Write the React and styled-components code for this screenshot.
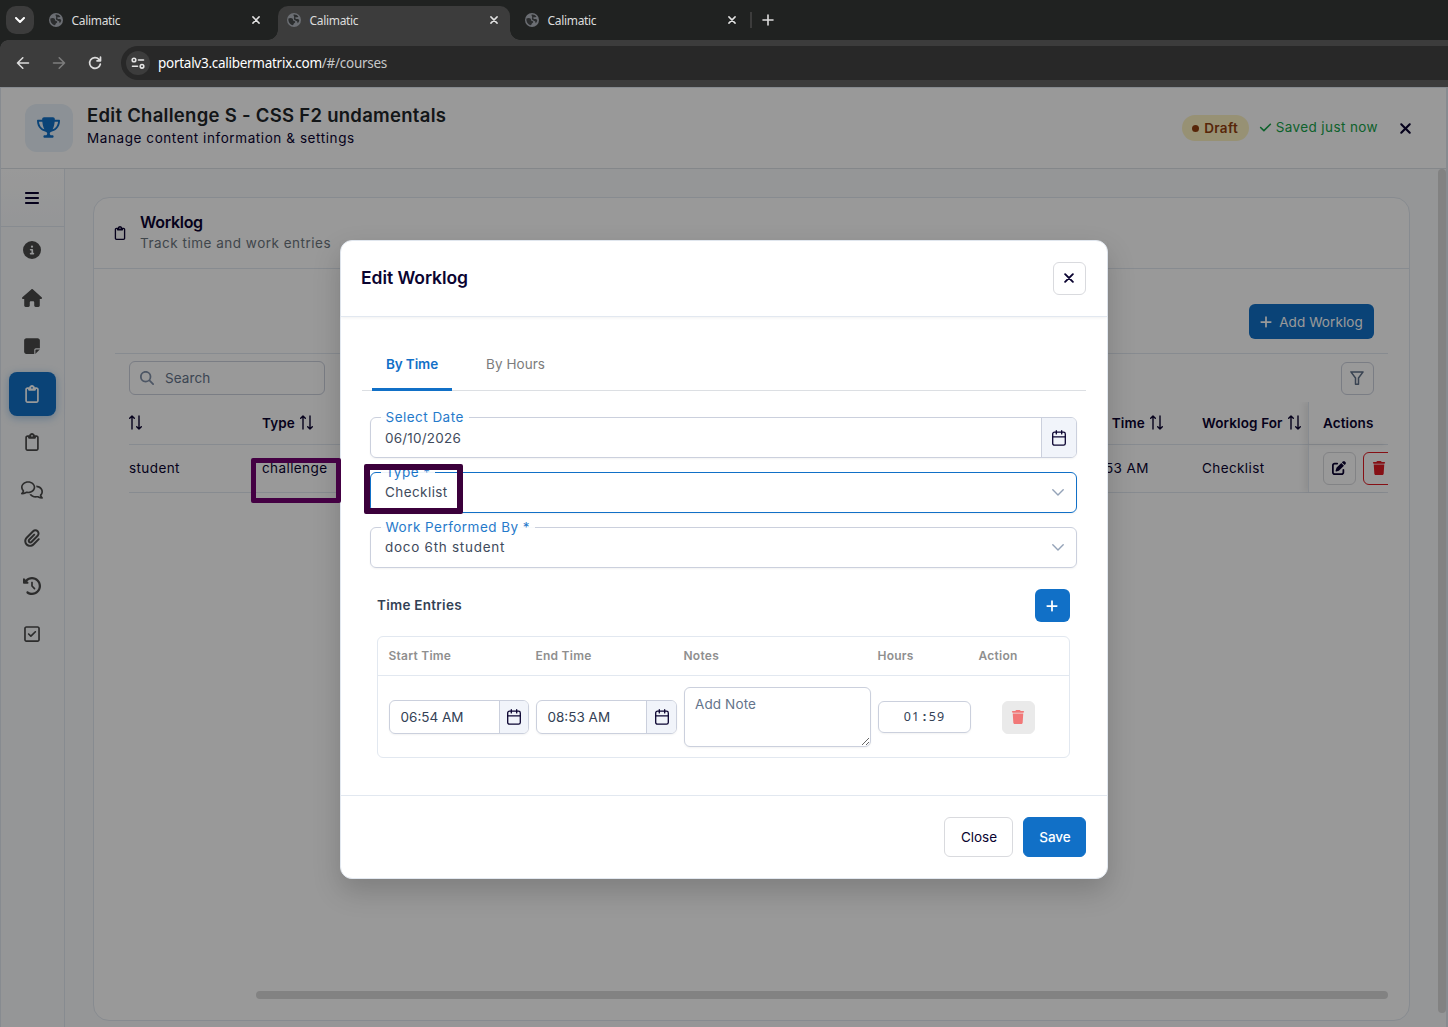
import React from "react";
import styled, { createGlobalStyle, css } from "styled-components";
import {
  FaTrophy, FaBars, FaCircleInfo, FaHouse, FaNoteSticky, FaRegClipboard, FaRegComments,
  FaPaperclip, FaClockRotateLeft, FaRegSquareCheck, FaXmark, FaCheck, FaPlus, FaTrash,
  FaMagnifyingGlass, FaPenToSquare,
} from "react-icons/fa6";

const primary = "#1170c7";
const ink = "#0a0330";
const line = "#e2e8f0";
const fieldLine = "#cbd0dd";

const GlobalStyle = createGlobalStyle`
  * { box-sizing: border-box; }
  body {
    margin: 0;
    overflow: hidden;
    font-family: Inter, "Open Sans", sans-serif;
    font-size: 13.5px;
    color: ${ink};
  }
  button { font: inherit; padding: 0; margin: 0; border: 0; background: none; color: inherit; }
  svg { display: block; flex: none; }
`;

const Window = styled.div`
  width: 1448px;
  height: 1027px;
  display: flex;
  flex-direction: column;
  overflow: hidden;
  background: #3c3c3c;
`;

/* Browser chrome */
const TabStrip = styled.div`
  height: 40px;
  flex: none;
  display: flex;
  align-items: flex-start;
  padding: 6px 0 0 6px;
  background: #202221;
  font-family: "Noto Sans", "Open Sans", sans-serif;
  font-size: 12px;
  color: #dcdcdc;
`;

const TabMenu = styled.button`
  width: 28px;
  height: 28px;
  border-radius: 10px;
  background: #3c3c3c;
  display: grid;
  place-items: center;
  margin-right: 6px;
`;

const foot = css`
  content: "";
  position: absolute;
  bottom: 0;
  width: 10px;
  height: 10px;
`;

const BrowserTab = styled.div`
  position: relative;
  width: 232px;
  height: 34px;
  margin-right: 6px;
  padding: 0 12px 6px 9px;
  display: flex;
  align-items: center;
  border-radius: 10px 10px 0 0;
  background: ${(p) => (p.$active ? "#3c3c3c" : "transparent")};
  ${(p) =>
    p.$active &&
    css`
      &::before { ${foot} left: -10px; background: radial-gradient(circle at 0 0, transparent 9.5px, #3c3c3c 10px); }
      &::after { ${foot} right: -10px; background: radial-gradient(circle at 100% 0, transparent 9.5px, #3c3c3c 10px); }
    `}
`;

const TabTitle = styled.span`
  flex: 1;
  margin-left: 8.5px;
  letter-spacing: -0.32px;
`;

const Separator = styled.i`
  width: 2px;
  height: 16px;
  margin: 6px 10px 0 -4px;
  background: #3c3c3c;
`;

const Toolbar = styled.div`
  height: 47px;
  flex: none;
  display: flex;
  align-items: center;
  padding-left: 14px;
  position: relative;
  background: #3c3c3c;
  &::before {
    content: "";
    position: absolute;
    left: 0;
    top: 0;
    width: 8px;
    height: 8px;
    background: radial-gradient(circle at 100% 100%, transparent 7.5px, #202221 8px);
  }
`;

const NavButton = styled.button`
  width: 18px;
  height: 18px;
  margin: 0 18px 1px 0;
  display: grid;
  place-items: center;
`;

const AddressBar = styled.div`
  flex: 1;
  height: 34px;
  margin: 0 0 1px -1px;
  display: flex;
  align-items: center;
  padding-left: 5px;
  border-radius: 17px 0 0 17px;
  background: #282828;
  font-family: "Noto Sans", "Open Sans", sans-serif;
  font-size: 13.5px;
  letter-spacing: -0.27px;
  color: #fff;
`;

const SiteInfo = styled.span`
  width: 24px;
  height: 24px;
  margin-right: 8px;
  border-radius: 50%;
  background: #3c3c3c;
  display: grid;
  place-items: center;
`;

const UrlPath = styled.span`
  color: #c7c7c7;
`;

/* Application page */
const Page = styled.div`
  position: relative;
  flex: 1;
  min-height: 0;
  display: flex;
  flex-direction: column;
  background: #f8fafc;
  border: solid ${line};
  border-width: 1px 2px 0 1px;
`;

const Header = styled.header`
  height: 81px;
  flex: none;
  display: flex;
  align-items: center;
  padding: 0 32px 0 24px;
  background: #fff;
  border-bottom: 1px solid #dde1e6;
`;

const TrophyTile = styled.div`
  width: 48px;
  height: 48px;
  margin-right: 14px;
  padding: 0 1px 1px 0;
  border-radius: 12px;
  background: #e9f2fa;
  color: ${primary};
  display: grid;
  place-items: center;
`;

const HeaderText = styled.div`
  flex: 1;
  margin-bottom: 4px;
`;

const Title = styled.h1`
  margin: 0;
  font-size: 18.5px;
  font-weight: 600;
  line-height: 25px;
  letter-spacing: 0.28px;
  color: #212529;
`;

const Subtitle = styled.p`
  margin: 0;
  line-height: 21px;
  letter-spacing: ${(p) => p.$spacing || 0.58}px;
  color: ${(p) => p.$color || ink};
`;

const DraftPill = styled.span`
  width: 67px;
  height: 26px;
  padding-bottom: 1px;
  border-radius: 13px;
  display: flex;
  align-items: center;
  justify-content: center;
  gap: 5px;
  background: #fcf2c2;
  color: #92400e;
  font-weight: 600;
  letter-spacing: 0.3px;
  &::before {
    content: "";
    width: 7px;
    height: 7px;
    margin-top: 1px;
    border-radius: 50%;
    background: currentColor;
  }
`;

const Saved = styled.span`
  display: flex;
  align-items: center;
  gap: 4px;
  margin: 0 19px 2px 10px;
  letter-spacing: 0.4px;
  color: #16a34a;
`;

const Main = styled.div`
  flex: 1;
  min-height: 0;
  display: flex;
`;

const Sidebar = styled.nav`
  width: 64px;
  flex: none;
  border-right: 1px solid ${line};
  display: flex;
  flex-direction: column;
  align-items: center;
  color: #4a4a4a;
`;

const MenuToggle = styled.button`
  width: 100%;
  height: 58px;
  flex: none;
  margin-bottom: -1px;
  padding-right: 1px;
  border-bottom: 1px solid ${line};
  background: linear-gradient(#fff, #f8fafc);
  display: grid;
  place-items: center;
  color: ${ink};
`;

const SideItem = styled.button`
  width: 47px;
  height: 44px;
  margin: 2px 0;
  padding-right: 1px;
  border-radius: 8px;
  display: grid;
  place-items: center;
  ${(p) =>
    p.$active &&
    css`
      background: ${primary};
      color: #fff;
      box-shadow: 0 2px 8px rgba(17, 112, 199, 0.35);
    `}
`;

const Content = styled.main`
  flex: 1;
  padding: 28px 28px 6px;
  min-width: 0;
`;

const Card = styled.section`
  height: 824px;
  display: flex;
  flex-direction: column;
  background: #fff;
  border: 1px solid ${line};
  border-radius: 16px;
`;

const CardHeader = styled.div`
  height: 71px;
  display: flex;
  align-items: center;
  padding-left: 19px;
  gap: 13px;
  border-bottom: 1px solid ${line};
`;

const CardTitle = styled.h2`
  margin: 0;
  font-size: 16px;
  line-height: 21px;
  font-weight: 600;
  letter-spacing: -0.3px;
`;

const CardBody = styled.div`
  flex: 1;
  display: flex;
  flex-direction: column;
  padding: 0 21px;
`;

const ActionBar = styled.div`
  height: 85px;
  display: flex;
  align-items: flex-end;
  justify-content: flex-end;
  padding: 0 14px 14px 0;
  border-bottom: 1px solid ${line};
`;

const AddButton = styled.button`
  width: 125px;
  height: 35px;
  padding-right: 1px;
  border-radius: 6px;
  background: ${primary};
  color: #fff;
  display: flex;
  align-items: center;
  justify-content: center;
  gap: 6px;
  letter-spacing: 0.08px;
`;

const FilterBar = styled.div`
  height: 48px;
  display: flex;
  align-items: center;
  justify-content: space-between;
  padding: 0 14px;
`;

const SearchBox = styled.div`
  width: 196px;
  height: 34px;
  padding-left: 10px;
  display: flex;
  align-items: center;
  gap: 11px;
  border: 1px solid ${fieldLine};
  border-radius: 6px;
  color: #64748b;
  letter-spacing: 0.1px;
`;

const IconButton = styled.button`
  width: 33px;
  height: 33px;
  flex: none;
  display: grid;
  place-items: center;
  padding: 0 1px 1px 0;
  border: 1px solid ${(p) => p.$border || "#d9dade"};
  border-radius: 6px;
  color: ${(p) => p.$color || ink};
  background: ${(p) => p.$bg || "transparent"};
`;

const LogTable = styled.div`
  margin-left: 14px;
  overflow: hidden;
`;

const LogRow = styled.div`
  display: grid;
  grid-template-columns: 133px 821px 119px 106px 80px;
  height: ${(p) => (p.$head ? 43 : 48)}px;
  border-bottom: 1px solid ${line};
  font-weight: ${(p) => (p.$head ? 600 : 400)};
  letter-spacing: ${(p) => (p.$head ? "0.12px" : "0.4px")};
`;

const LogCell = styled.div`
  display: flex;
  align-items: center;
  gap: 5px;
  padding-bottom: 1px;
  white-space: nowrap;
  svg { margin-bottom: 1px; }
`;

const ActionCell = styled(LogCell)`
  padding: 0 0 ${(p) => (p.$head ? 1 : 0)}px 14px;
  gap: 7px;
  overflow: visible;
  border-left: 1px solid ${line};
  box-shadow: -4px 0 6px rgba(0, 0, 0, 0.07);
  svg { margin: 0; }
`;

const HScroll = styled.div`
  height: 8px;
  margin: auto 0 21px 141px;
  border-radius: 4px;
  background: #d9d9d9;
`;

const VScroll = styled.div`
  width: 8px;
  height: 844px;
  flex: none;
  border-radius: 4px;
  background: #d9d9d9;
`;

/* Modal */
const Backdrop = styled.div`
  position: absolute;
  inset: -1px -2px 0 -1px;
  display: flex;
  justify-content: center;
  align-items: flex-start;
  padding-top: 153px;
  background: rgba(0, 0, 0, 0.4);
`;

const Dialog = styled.div`
  width: 768px;
  height: 639px;
  display: flex;
  flex-direction: column;
  background: #fff;
  border: 1px solid ${line};
  border-radius: 12px;
  box-shadow: 0 12px 28px rgba(0, 0, 0, 0.18);
`;

const DialogHeader = styled.div`
  height: 76px;
  flex: none;
  display: flex;
  align-items: center;
  justify-content: space-between;
  padding: 0 21px 0 20px;
  border-bottom: 1px solid ${line};
  box-shadow: 0 1px 3px rgba(0, 0, 0, 0.06);
`;

const DialogTitle = styled.h2`
  margin: 0 0 2px;
  font-size: 17.5px;
  font-weight: 600;
  letter-spacing: -0.06px;
`;

const DialogBody = styled.div`
  flex: 1;
  padding: 20px 21px 0;
`;

const Tabs = styled.div`
  height: 54px;
  display: flex;
  gap: 20px;
  padding-left: 10px;
  border-bottom: 1px solid #dcdfe3;
`;

const Tab = styled.button`
  height: 54px;
  width: ${(p) => p.$width}px;
  padding-top: 2px;
  border-bottom: 3px solid ${(p) => (p.$active ? primary : "transparent")};
  border-radius: 2px 2px 0 0;
  color: ${(p) => (p.$active ? primary : "#7c7c7c")};
  font-weight: ${(p) => (p.$active ? 600 : 400)};
  letter-spacing: ${(p) => (p.$active ? "-0.1px" : "0.05px")};
`;

const Fields = styled.div`
  display: flex;
  flex-direction: column;
  gap: 14px;
  padding: 26px 9px 0 8px;
`;

const Field = styled.div`
  position: relative;
  height: 41px;
  padding-left: 14px;
  display: flex;
  align-items: center;
  justify-content: space-between;
  border: 1px solid ${(p) => (p.$focused ? primary : fieldLine)};
  border-radius: 6px;
  box-shadow: 0 1px 2px rgba(18, 18, 23, 0.05);
  color: #3f4b5c;
`;

const FieldValue = styled.span`
  padding-bottom: ${(p) => p.$lift || 0}px;
  letter-spacing: ${(p) => p.$spacing}px;
`;

const FieldLabel = styled.label`
  position: absolute;
  left: 10px;
  top: -10px;
  padding: 0 5px 0 4.5px;
  line-height: 18px;
  background: #fff;
  color: ${primary};
  opacity: 0.92;
  letter-spacing: 0.47px;
`;

const FieldButton = styled.span`
  width: ${(p) => p.$width}px;
  align-self: stretch;
  display: grid;
  place-items: center;
  border-left: 1px solid ${fieldLine};
  border-radius: 0 5px 5px 0;
  background: #f1f4fa;
  color: ${ink};
`;

const ChevronSlot = styled.span`
  margin-right: 12px;
`;

const EntriesHeader = styled.div`
  display: flex;
  align-items: center;
  justify-content: space-between;
  margin: 21px 16px 14px 15px;
  height: 33px;
  font-weight: 600;
  color: #334155;
  letter-spacing: 0.27px;
`;

const EntriesTitle = styled.span`
  padding-bottom: 2px;
`;

const PlusButton = styled.button`
  width: 35px;
  height: 33px;
  padding-right: 1px;
  border-radius: 6px;
  background: ${primary};
  color: #fff;
  display: grid;
  place-items: center;
`;

const Entries = styled.div`
  height: 122px;
  margin: 0 16px 0 15px;
  border: 1px solid ${line};
  border-radius: 6px;
`;

const EntryRow = styled.div`
  display: grid;
  grid-template-columns: 147px 148px 194px 101px 1fr;
  align-items: center;
  padding-left: 11px;
  height: ${(p) => (p.$head ? 39 : 82)}px;
  border-bottom: ${(p) => (p.$head ? `1px solid ${line}` : "0")};
`;

const EntryHead = styled.span`
  margin: 0 0 2px -0.5px;
  font-size: 12px;
  font-weight: 600;
  letter-spacing: 0.25px;
  color: #8f8f8f;
`;

const TimeInput = styled.div`
  width: ${(p) => p.$width}px;
  height: 34px;
  display: flex;
  align-items: center;
  justify-content: space-between;
  padding-left: 10.5px;
  border: 1px solid ${fieldLine};
  border-radius: 6px;
  box-shadow: 0 1px 2px rgba(18, 18, 23, 0.05);
  color: #334155;
`;

const NoteArea = styled.textarea`
  width: 187px;
  height: 60px;
  margin: 0;
  padding: 8px 10px;
  border: 1px solid ${fieldLine};
  border-radius: 6px;
  box-shadow: 0 1px 2px rgba(18, 18, 23, 0.05);
  font: inherit;
  line-height: 17px;
  letter-spacing: 0.12px;
  outline: 0;
  &::placeholder { color: #64748b; opacity: 1; }
`;

const HoursBox = styled.div`
  width: 93px;
  height: 32px;
  padding-bottom: 1px;
  display: flex;
  align-items: center;
  justify-content: center;
  border: 1px solid ${fieldLine};
  border-radius: 6px;
  box-shadow: 0 1px 2px rgba(18, 18, 23, 0.05);
  font-family: "Noto Sans", "Open Sans", sans-serif;
  font-size: 12.5px;
  letter-spacing: 1.2px;
  color: #334155;
`;

const Colon = styled.b`
  margin: 0 1.2px 0 2.4px;
`;

const DeleteEntry = styled(IconButton)`
  margin-left: 23px;
`;

const DialogFooter = styled.div`
  height: 83px;
  flex: none;
  display: flex;
  align-items: center;
  justify-content: flex-end;
  gap: 10px;
  padding-right: 21px;
  border-top: 1px solid ${line};
`;

const FooterButton = styled.button`
  width: ${(p) => (p.$primary ? 63 : 69)}px;
  height: 40px;
  padding-left: 1px;
  border-radius: 6px;
  border: 1px solid ${(p) => (p.$primary ? primary : "#d9dade")};
  background: ${(p) => (p.$primary ? primary : "#fff")};
  color: ${(p) => (p.$primary ? "#fff" : ink)};
  font-weight: ${(p) => (p.$primary ? 500 : 400)};
`;

/* Highlight frames drawn over the page */
const Marker = styled.div`
  position: absolute;
  left: ${(p) => p.$x}px;
  top: ${(p) => p.$y}px;
  width: ${(p) => p.$w}px;
  height: ${(p) => p.$h}px;
  border: ${(p) => p.$t}px solid ${(p) => p.$color};
  border-radius: 2px;
`;

const stroke = { fill: "none", stroke: "currentColor", strokeLinecap: "round", strokeLinejoin: "round" };

const Globe = () => (
  <svg width="14" height="14" viewBox="0 0 14 14">
    <circle cx="7" cy="7" r="7" fill="#6b6e73" />
    <path d="M1.4 5.600c1.600-.9 3.400-.9 4.300.2.700.9 0 1.600.9 2 .9.300 1.800.300 1.600 1.400-.2.900-1.300.8-1.500 1.600-.1.700-.5 1.400-1.300 1.400C2.900 11.600 1 8.800 1.400 5.600zM6.600 1.600c1.900-.3 3.700.5 4.700 1.900-.3.900-1.200.8-2 .7-.9 0-1.300.6-.8 1.200.5.700 1.500.5 2.200.7.9.3 1.600.8 1.500 1.600-.2 1-.7 1.800-1.400 2.500-.5-.6-.2-1.400-.8-2C9.300 7.600 7.900 7.500 7.100 6.400c-.6-.9.200-1.600.1-2.400-.1-.8-1-1.300-.6-2.400z" fill="#2b2d2e" />
  </svg>
);

const Cross = ({ size = 8, width = 1.5, color = "#e2e2e2" }) => (
  <svg width={size} height={size} viewBox="0 0 8 8" {...stroke} stroke={color} strokeWidth={width}>
    <path d="M.9.9l6.200 6.200M7.100.9L.9 7.100" />
  </svg>
);

const SortArrows = () => (
  <svg width="14" height="15" viewBox="0 0 14 15" {...stroke} strokeWidth="1.400">
    <path d="M3 14V1M.7 3.300L3 1l2.300 2.300M10 1v13M7.700 11.700L10 14l2.300-2.300" />
  </svg>
);

const Calendar = () => (
  <svg width="14" height="16" viewBox="0 0 14 16" {...stroke} strokeWidth="1.300">
    <rect x=".7" y="2.200" width="12.600" height="13" rx="1.800" />
    <path d="M.7 6.800h12.600M4.300.7v3.200M9.700.7v3.200" />
  </svg>
);

const Chevron = () => (
  <svg width="12" height="7" viewBox="0 0 12 7" {...stroke} stroke="#94a3b8" strokeWidth="1.400">
    <path d="M.8.8L6 6 11.200.8" />
  </svg>
);

const Funnel = () => (
  <svg width="14" height="14" viewBox="0 0 14 14" {...stroke} stroke="#5f7088" strokeWidth="1.500">
    <path d="M.9.9h12.200L8.500 7v6.200h-3V7z" />
  </svg>
);

const sideIcons = [
  [FaCircleInfo, 18], [FaHouse, 20], [FaNoteSticky, 18], [FaRegClipboard, 18], [FaRegClipboard, 18],
  [FaRegComments, 22], [FaPaperclip, 18], [FaClockRotateLeft, 18], [FaRegSquareCheck, 18],
];

export default function App() {
  return (
    <Window>
      <GlobalStyle />
      <TabStrip>
        <TabMenu>
          <svg width="10" height="6" viewBox="0 0 10 6" {...stroke} stroke="#fff" strokeWidth="2">
            <path d="M1 1l4 4 4-4" />
          </svg>
        </TabMenu>
        {[0, 1, 2].map((i) => (
          <BrowserTab key={i} $active={i === 1}>
            <Globe />
            <TabTitle>Calimatic</TabTitle>
            <Cross />
          </BrowserTab>
        ))}
        <Separator />
        <svg width="12" height="28" viewBox="0 0 12 28" {...stroke} stroke="#dcdcdc" strokeWidth="1.600">
          <path d="M6 9v10M1 14h10" />
        </svg>
      </TabStrip>
      <Toolbar>
        <NavButton>
          <svg width="14" height="14" viewBox="0 0 14 14" {...stroke} stroke="#dcdcdc" strokeWidth="1.600">
            <path d="M12.500 7H1.500M6.800 1.800L1.500 7l5.300 5.200" />
          </svg>
        </NavButton>
        <NavButton>
          <svg width="14" height="14" viewBox="0 0 14 14" {...stroke} stroke="#7d7d7d" strokeWidth="1.600">
            <path d="M1.500 7h11M7.200 1.800L12.500 7l-5.300 5.200" />
          </svg>
        </NavButton>
        <NavButton>
          <svg width="14" height="14" viewBox="0 0 14 14" {...stroke} stroke="#dcdcdc" strokeWidth="1.700">
            <path d="M12.300 8.200A5.400 5.400 0 1 1 11 3.300l1.500 1.400M12.500 1.200v3.600H9" />
          </svg>
        </NavButton>
        <AddressBar>
          <SiteInfo>
            <svg width="14" height="12" viewBox="0 0 14 12" {...stroke} stroke="#e6e6e6" strokeWidth="1.600">
              <circle cx="3" cy="3" r="1.800" />
              <path d="M7.500 3h5M1.500 9.300h5" />
              <circle cx="11" cy="9.300" r="1.800" />
            </svg>
          </SiteInfo>
          <span>portalv3.calibermatrix.com<UrlPath>/#/courses</UrlPath></span>
        </AddressBar>
      </Toolbar>

      <Page>
        <Header>
          <TrophyTile><FaTrophy size={23} /></TrophyTile>
          <HeaderText>
            <Title>Edit Challenge S - CSS F2 undamentals</Title>
            <Subtitle>Manage content information &amp; settings</Subtitle>
          </HeaderText>
          <DraftPill>Draft</DraftPill>
          <Saved><FaCheck size={13} />Saved just now</Saved>
          <FaXmark size={17} />
        </Header>
        <Main>
          <Sidebar>
            <MenuToggle><FaBars size={16} /></MenuToggle>
            {sideIcons.map(([Icon, size], i) => (
              <SideItem key={i} $active={i === 3}><Icon size={size} /></SideItem>
            ))}
          </Sidebar>
          <Content>
            <Card>
              <CardHeader>
                <FaRegClipboard size={14} />
                <div>
                  <CardTitle>Worklog</CardTitle>
                  <Subtitle $color="#6c757d" $spacing={0.5}>Track time and work entries</Subtitle>
                </div>
              </CardHeader>
              <CardBody>
                <ActionBar>
                  <AddButton><FaPlus size={14} />Add Worklog</AddButton>
                </ActionBar>
                <FilterBar>
                  <SearchBox><FaMagnifyingGlass size={14} color="#8190a8" />Search</SearchBox>
                  <IconButton $border={fieldLine}><Funnel /></IconButton>
                </FilterBar>
                <LogTable>
                  <LogRow $head>
                    <LogCell><SortArrows /></LogCell>
                    <LogCell>Type<SortArrows /></LogCell>
                    <LogCell>End Time<SortArrows /></LogCell>
                    <LogCell>Worklog For<SortArrows /></LogCell>
                    <ActionCell $head>Actions</ActionCell>
                  </LogRow>
                  <LogRow>
                    <LogCell>student</LogCell>
                    <LogCell>challenge</LogCell>
                    <LogCell>08:53 AM</LogCell>
                    <LogCell>Checklist</LogCell>
                    <ActionCell>
                      <IconButton><FaPenToSquare size={14} /></IconButton>
                      <IconButton $border="#e01b24" $color="#e01b24"><FaTrash size={14} /></IconButton>
                    </ActionCell>
                  </LogRow>
                </LogTable>
                <HScroll />
              </CardBody>
            </Card>
          </Content>
          <VScroll />
        </Main>

        <Backdrop>
          <Dialog>
            <DialogHeader>
              <DialogTitle>Edit Worklog</DialogTitle>
              <IconButton><Cross size={10} width={1.5} color={ink} /></IconButton>
            </DialogHeader>
            <DialogBody>
              <Tabs>
                <Tab $active $width={80}>By Time</Tab>
                <Tab $width={87}>By Hours</Tab>
              </Tabs>
              <Fields>
                <Field>
                  <FieldLabel>Select Date</FieldLabel>
                  <FieldValue $spacing={0.2}>06/10/2026</FieldValue>
                  <FieldButton $width={35}><Calendar /></FieldButton>
                </Field>
                <Field $focused>
                  <FieldLabel>Type *</FieldLabel>
                  <FieldValue $lift={2} $spacing={0.42}>Checklist</FieldValue>
                  <ChevronSlot><Chevron /></ChevronSlot>
                </Field>
                <Field>
                  <FieldLabel>Work Performed By *</FieldLabel>
                  <FieldValue $lift={2} $spacing={0.72}>doco 6th student</FieldValue>
                  <ChevronSlot><Chevron /></ChevronSlot>
                </Field>
              </Fields>
              <EntriesHeader>
                <EntriesTitle>Time Entries</EntriesTitle>
                <PlusButton><FaPlus size={14} /></PlusButton>
              </EntriesHeader>
              <Entries>
                <EntryRow $head>
                  <EntryHead>Start Time</EntryHead>
                  <EntryHead>End Time</EntryHead>
                  <EntryHead>Notes</EntryHead>
                  <EntryHead>Hours</EntryHead>
                  <EntryHead>Action</EntryHead>
                </EntryRow>
                <EntryRow>
                  <TimeInput $width={140}>06:54 AM<FieldButton $width={29}><Calendar /></FieldButton></TimeInput>
                  <TimeInput $width={141}>08:53 AM<FieldButton $width={30}><Calendar /></FieldButton></TimeInput>
                  <NoteArea placeholder="Add Note" />
                  <HoursBox>01<Colon>:</Colon>59</HoursBox>
                  <DeleteEntry $bg="#eaeaea" $border="#eaeaea" $color="#f17878"><FaTrash size={14} /></DeleteEntry>
                </EntryRow>
              </Entries>
            </DialogBody>
            <DialogFooter>
              <FooterButton>Close</FooterButton>
              <FooterButton $primary>Save</FooterButton>
            </DialogFooter>
          </Dialog>
        </Backdrop>
        <Marker $x={249.5} $y={369.5} $w={90} $h={45} $t={5.5} $color="#440043" />
        <Marker $x={362.5} $y={376.3} $w={99.3} $h={49.4} $t={6} $color="#3b003b" />
      </Page>
    </Window>
  );
}
